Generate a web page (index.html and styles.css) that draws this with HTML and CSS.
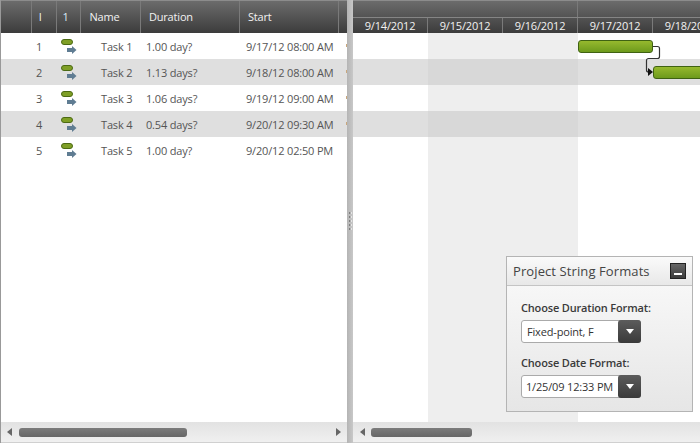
FILE: index.html
```html
<!DOCTYPE html>
<html lang="en">
<head>
    <meta charset="UTF-8">
    <title>Project String Formats</title>
    <link rel="stylesheet" href="styles.css">
</head>
<body>
    <div class="gantt">
        <!-- Task grid -->
        <section class="pane grid-pane">
            <div class="grid-head">
                <div class="col col-blank"></div>
                <div class="col col-id">I</div>
                <div class="col col-info">1</div>
                <div class="col col-name">Name</div>
                <div class="col col-dur">Duration</div>
                <div class="col col-start">Start</div>
                <div class="col col-end"></div>
            </div>
            <div class="grid-body">
                <div class="row">
                    <div class="cell col-blank"></div>
                    <div class="cell col-id">1</div>
                    <div class="cell col-info"><svg class="task-icon" width="18" height="16" viewBox="0 0 18 16"><rect x="0.5" y="0.5" width="11" height="5" rx="2.5" fill="#7f9f26" stroke="#4c6a14"/><path d="M6 9h5V7l4.500 4-4.500 4v-2H6z" fill="#5f7c92"/></svg></div>
                    <div class="cell col-name">Task 1</div>
                    <div class="cell col-dur">1.00 day?</div>
                    <div class="cell col-start">9/17/12 08:00 AM</div>
                    <div class="cell col-end"><span class="clip-mark"></span></div>
                </div>
                <div class="row alt">
                    <div class="cell col-blank"></div>
                    <div class="cell col-id">2</div>
                    <div class="cell col-info"><svg class="task-icon" width="18" height="16" viewBox="0 0 18 16"><rect x="0.5" y="0.5" width="11" height="5" rx="2.5" fill="#7f9f26" stroke="#4c6a14"/><path d="M6 9h5V7l4.500 4-4.500 4v-2H6z" fill="#5f7c92"/></svg></div>
                    <div class="cell col-name">Task 2</div>
                    <div class="cell col-dur">1.13 days?</div>
                    <div class="cell col-start">9/18/12 08:00 AM</div>
                    <div class="cell col-end"><span class="clip-mark"></span></div>
                </div>
                <div class="row">
                    <div class="cell col-blank"></div>
                    <div class="cell col-id">3</div>
                    <div class="cell col-info"><svg class="task-icon" width="18" height="16" viewBox="0 0 18 16"><rect x="0.5" y="0.5" width="11" height="5" rx="2.5" fill="#7f9f26" stroke="#4c6a14"/><path d="M6 9h5V7l4.500 4-4.500 4v-2H6z" fill="#5f7c92"/></svg></div>
                    <div class="cell col-name">Task 3</div>
                    <div class="cell col-dur">1.06 days?</div>
                    <div class="cell col-start">9/19/12 09:00 AM</div>
                    <div class="cell col-end"><span class="clip-mark"></span></div>
                </div>
                <div class="row alt">
                    <div class="cell col-blank"></div>
                    <div class="cell col-id">4</div>
                    <div class="cell col-info"><svg class="task-icon" width="18" height="16" viewBox="0 0 18 16"><rect x="0.5" y="0.5" width="11" height="5" rx="2.5" fill="#7f9f26" stroke="#4c6a14"/><path d="M6 9h5V7l4.500 4-4.500 4v-2H6z" fill="#5f7c92"/></svg></div>
                    <div class="cell col-name">Task 4</div>
                    <div class="cell col-dur">0.54 days?</div>
                    <div class="cell col-start">9/20/12 09:30 AM</div>
                    <div class="cell col-end"><span class="clip-mark"></span></div>
                </div>
                <div class="row">
                    <div class="cell col-blank"></div>
                    <div class="cell col-id">5</div>
                    <div class="cell col-info"><svg class="task-icon" width="18" height="16" viewBox="0 0 18 16"><rect x="0.5" y="0.5" width="11" height="5" rx="2.5" fill="#7f9f26" stroke="#4c6a14"/><path d="M6 9h5V7l4.500 4-4.500 4v-2H6z" fill="#5f7c92"/></svg></div>
                    <div class="cell col-name">Task 5</div>
                    <div class="cell col-dur">1.00 day?</div>
                    <div class="cell col-start">9/20/12 02:50 PM</div>
                    <div class="cell col-end"></div>
                </div>
            </div>
            <div class="scrollbar">
                <span class="arrow arrow-left"></span>
                <div class="track"><div class="thumb grid-thumb"></div></div>
                <span class="arrow arrow-right"></span>
            </div>
        </section>

        <!-- Splitter -->
        <div class="splitter">
            <div class="grip">
                <span></span><span></span><span></span><span></span><span></span>
            </div>
        </div>

        <!-- Timeline -->
        <section class="pane time-pane">
            <div class="time-head">
                <div class="weeks">
                    <div class="week first-week"></div>
                    <div class="week"></div>
                </div>
                <div class="days">
                    <div class="day">9/14/2012</div>
                    <div class="day">9/15/2012</div>
                    <div class="day">9/16/2012</div>
                    <div class="day">9/17/2012</div>
                    <div class="day">9/18/2012</div>
                </div>
            </div>
            <div class="time-body">
                <div class="time-row"></div>
                <div class="time-row alt"></div>
                <div class="time-row"></div>
                <div class="time-row alt"></div>
                <div class="time-row"></div>

                <div class="bar bar-one"></div>
                <div class="bar bar-two"></div>
                <svg class="link" width="30" height="40" viewBox="0 0 30 40">
                    <path d="M8 7.500h4.500a2 2 0 0 1 2 2v8a2 2 0 0 1-2 2H3.500a2 2 0 0 0-2 2v9.500a2 2 0 0 0 2 2H6" fill="none" stroke="#333" stroke-width="1.2"/>
                    <path d="M3 29l5 4-5 4z" fill="#111"/>
                </svg>
            </div>
            <div class="scrollbar">
                <span class="arrow arrow-left"></span>
                <div class="track"><div class="thumb time-thumb"></div></div>
            </div>
        </section>
    </div>

    <!-- Floating settings panel -->
    <aside class="panel">
        <div class="panel-title">
            <span>Project String Formats</span>
            <button class="minimize"><span></span></button>
        </div>
        <div class="panel-body">
            <label class="field-label">Choose Duration Format:</label>
            <div class="combo">
                <span class="combo-value combo-pad">Fixed-point, F</span>
                <span class="combo-btn"><i></i></span>
            </div>
            <label class="field-label second">Choose Date Format:</label>
            <div class="combo">
                <span class="combo-value">1/25/09 12:33 PM</span>
                <span class="combo-btn"><i></i></span>
            </div>
        </div>
    </aside>
</body>
</html>
```

FILE: styles.css
```css
/* General styles */
html, body {
    margin: 0;
    padding: 0;
    width: 700px;
    height: 443px;
    overflow: hidden;
}

body {
    position: relative;
    font-family: "Open Sans", sans-serif;
    font-size: 11px;
    letter-spacing: -0.17px;
    color: #555;
    background: #fff;
}

.gantt {
    display: flex;
    height: 443px;
}

.pane {
    display: flex;
    flex-direction: column;
    overflow: hidden;
}

.grid-pane {
    width: 347px;
    box-sizing: border-box;
    border-left: 1px solid #999;
}

.time-pane {
    width: 347px;
}

/* Headers */
.grid-head {
    display: flex;
    height: 33px;
    box-sizing: border-box;
    border-top: 1px solid #8c8c8c;
    background: linear-gradient(to bottom, #6c6c6c, #3c3c3c);
    color: #f2f2f2;
}

.grid-head .col {
    box-sizing: border-box;
    height: 32px;
    line-height: 31px;
    padding-left: 8px;
    border-right: 1px solid #7a7a7a;
}

.grid-head .col-id {
    padding-left: 7px;
}

.grid-head .col-info {
    padding-left: 6px;
    color: #d8ecf8;
}

.col-blank { width: 31px; }
.col-id { width: 25px; }
.col-info { width: 25px; }
.col-name { width: 60px; }
.col-dur { width: 100px; }
.col-start { width: 100px; }
.col-end { width: 5px; }

.grid-head .col-end {
    border-right: 0;
}

/* Grid rows */
.grid-body {
    flex: 1;
}

.row {
    display: flex;
    height: 26px;
}

.row.alt {
    background: #dfdfdf;
}

.cell {
    box-sizing: border-box;
    line-height: 27px;
    padding-left: 4px;
    white-space: nowrap;
    overflow: hidden;
}

.cell.col-name {
    padding-left: 19px;
}

.cell.col-info {
    padding: 6px 0 0 4px;
    line-height: 0;
}

.cell.col-end {
    padding: 11px 0 0 4px;
    line-height: 0;
}

.clip-mark {
    display: block;
    width: 1px;
    height: 3px;
    background: #c9a77c;
}

/* Scrollbars */
.scrollbar {
    display: flex;
    align-items: center;
    height: 21px;
    flex: none;
    background: linear-gradient(to bottom, #e2e2e2, #f0f0f0);
    border-bottom: 1px solid #d0d0d0;
    box-sizing: border-box;
}

.track {
    flex: 1;
    padding: 0 7px;
}

.thumb {
    height: 9px;
    border-radius: 3px;
    background: linear-gradient(to bottom, #7c7c7c, #666);
}

.grid-thumb { width: 168px; }
.time-thumb { width: 101px; }

.arrow {
    width: 0;
    height: 0;
    border-top: 4px solid transparent;
    border-bottom: 4px solid transparent;
}

.arrow-left {
    margin-left: 6px;
    border-right: 5px solid #666;
}

.arrow-right {
    margin-right: 6px;
    border-left: 5px solid #666;
}

.time-pane .arrow-left {
    margin-left: 7px;
}

.time-pane .track {
    padding-left: 6px;
}

/* Splitter */
.splitter {
    display: flex;
    align-items: center;
    justify-content: center;
    width: 6px;
    background: linear-gradient(to right, #b4b4b4, #c8c8c8);
}

.grip span {
    display: block;
    width: 3px;
    height: 2px;
    margin-bottom: 2px;
    background: linear-gradient(to right, #666, #fff);
}

/* Timeline */
.time-head {
    height: 33px;
    box-sizing: border-box;
    border-top: 1px solid #8c8c8c;
    background: linear-gradient(to bottom, #6c6c6c, #3c3c3c);
    overflow: hidden;
}

.weeks {
    display: flex;
    height: 16px;
    border-bottom: 1px solid #858585;
}

.week {
    flex: none;
    width: 300px;
}

.first-week {
    width: 224px;
    border-right: 1px solid #7a7a7a;
}

.days {
    display: flex;
    width: 400px;
    height: 15px;
}

.day {
    flex: none;
    box-sizing: border-box;
    width: 75px;
    text-align: center;
    line-height: 16px;
    color: #f2f2f2;
    border-right: 1px solid #7a7a7a;
}

.time-body {
    position: relative;
    flex: 1;
    background: linear-gradient(to right, #fff 75px, #eee 75px, #eee 225px, #fff 225px);
}

.time-row {
    height: 26px;
}

.time-row.alt {
    background: linear-gradient(to right, #dfdfdf 75px, #d8d8d8 75px, #d8d8d8 225px, #dfdfdf 225px);
}

.bar {
    position: absolute;
    box-sizing: border-box;
    height: 13px;
    border: 1px solid #3f6212;
    border-radius: 3px;
    background: linear-gradient(to bottom, #96b92e, #6d9a1c);
}

.bar-one {
    left: 225px;
    top: 7px;
    width: 75px;
}

.bar-two {
    left: 300px;
    top: 33px;
    width: 60px;
}

.link {
    position: absolute;
    left: 292px;
    top: 6px;
    overflow: visible;
}

/* Floating panel */
.panel {
    position: absolute;
    left: 506px;
    top: 256px;
    width: 187px;
    height: 156px;
    box-sizing: border-box;
    border: 1px solid #b4b4b4;
    background: linear-gradient(to bottom, #fbfbfb, #e6e6e6);
    color: #333;
}

.panel-title {
    display: flex;
    align-items: center;
    justify-content: space-between;
    height: 28px;
    padding: 0 6px 0 6px;
    border-bottom: 1px solid #c4c4c4;
    background: linear-gradient(to bottom, #fafafa, #e8e8e8);
    font-size: 13px;
    letter-spacing: 0.1px;
    color: #444;
}

.minimize {
    width: 16px;
    height: 16px;
    padding: 0;
    border: 1px solid #222;
    background: linear-gradient(to bottom, #666, #3c3c3c);
    display: flex;
    align-items: flex-end;
    justify-content: center;
}

.minimize span {
    display: block;
    width: 8px;
    height: 2px;
    margin-bottom: 3px;
    background: #fff;
}

.panel-body {
    padding: 14px 14px 0 14px;
}

.field-label {
    display: block;
    height: 15px;
    line-height: 15px;
    margin-bottom: 5px;
    font-weight: 600;
    font-size: 11px;
    color: #3a3a3a;
}

.field-label.second {
    margin-top: 12px;
}

.combo {
    display: flex;
    width: 120px;
    height: 23px;
    box-sizing: border-box;
    border: 1px solid #aaa;
    border-radius: 3px;
    background: #fff;
}

.combo-value {
    flex: 1;
    line-height: 21px;
    padding-left: 4px;
    white-space: nowrap;
    color: #333;
}

.combo-pad {
    padding-left: 5px;
}

.combo-btn {
    display: flex;
    align-items: center;
    justify-content: center;
    width: 23px;
    margin: -1px -1px -1px 0;
    border-radius: 3px;
    background: linear-gradient(to bottom, #5c5c5c, #3a3a3a);
}

.combo-btn i {
    width: 0;
    height: 0;
    border-left: 4px solid transparent;
    border-right: 4px solid transparent;
    border-top: 5px solid #fff;
}
```
